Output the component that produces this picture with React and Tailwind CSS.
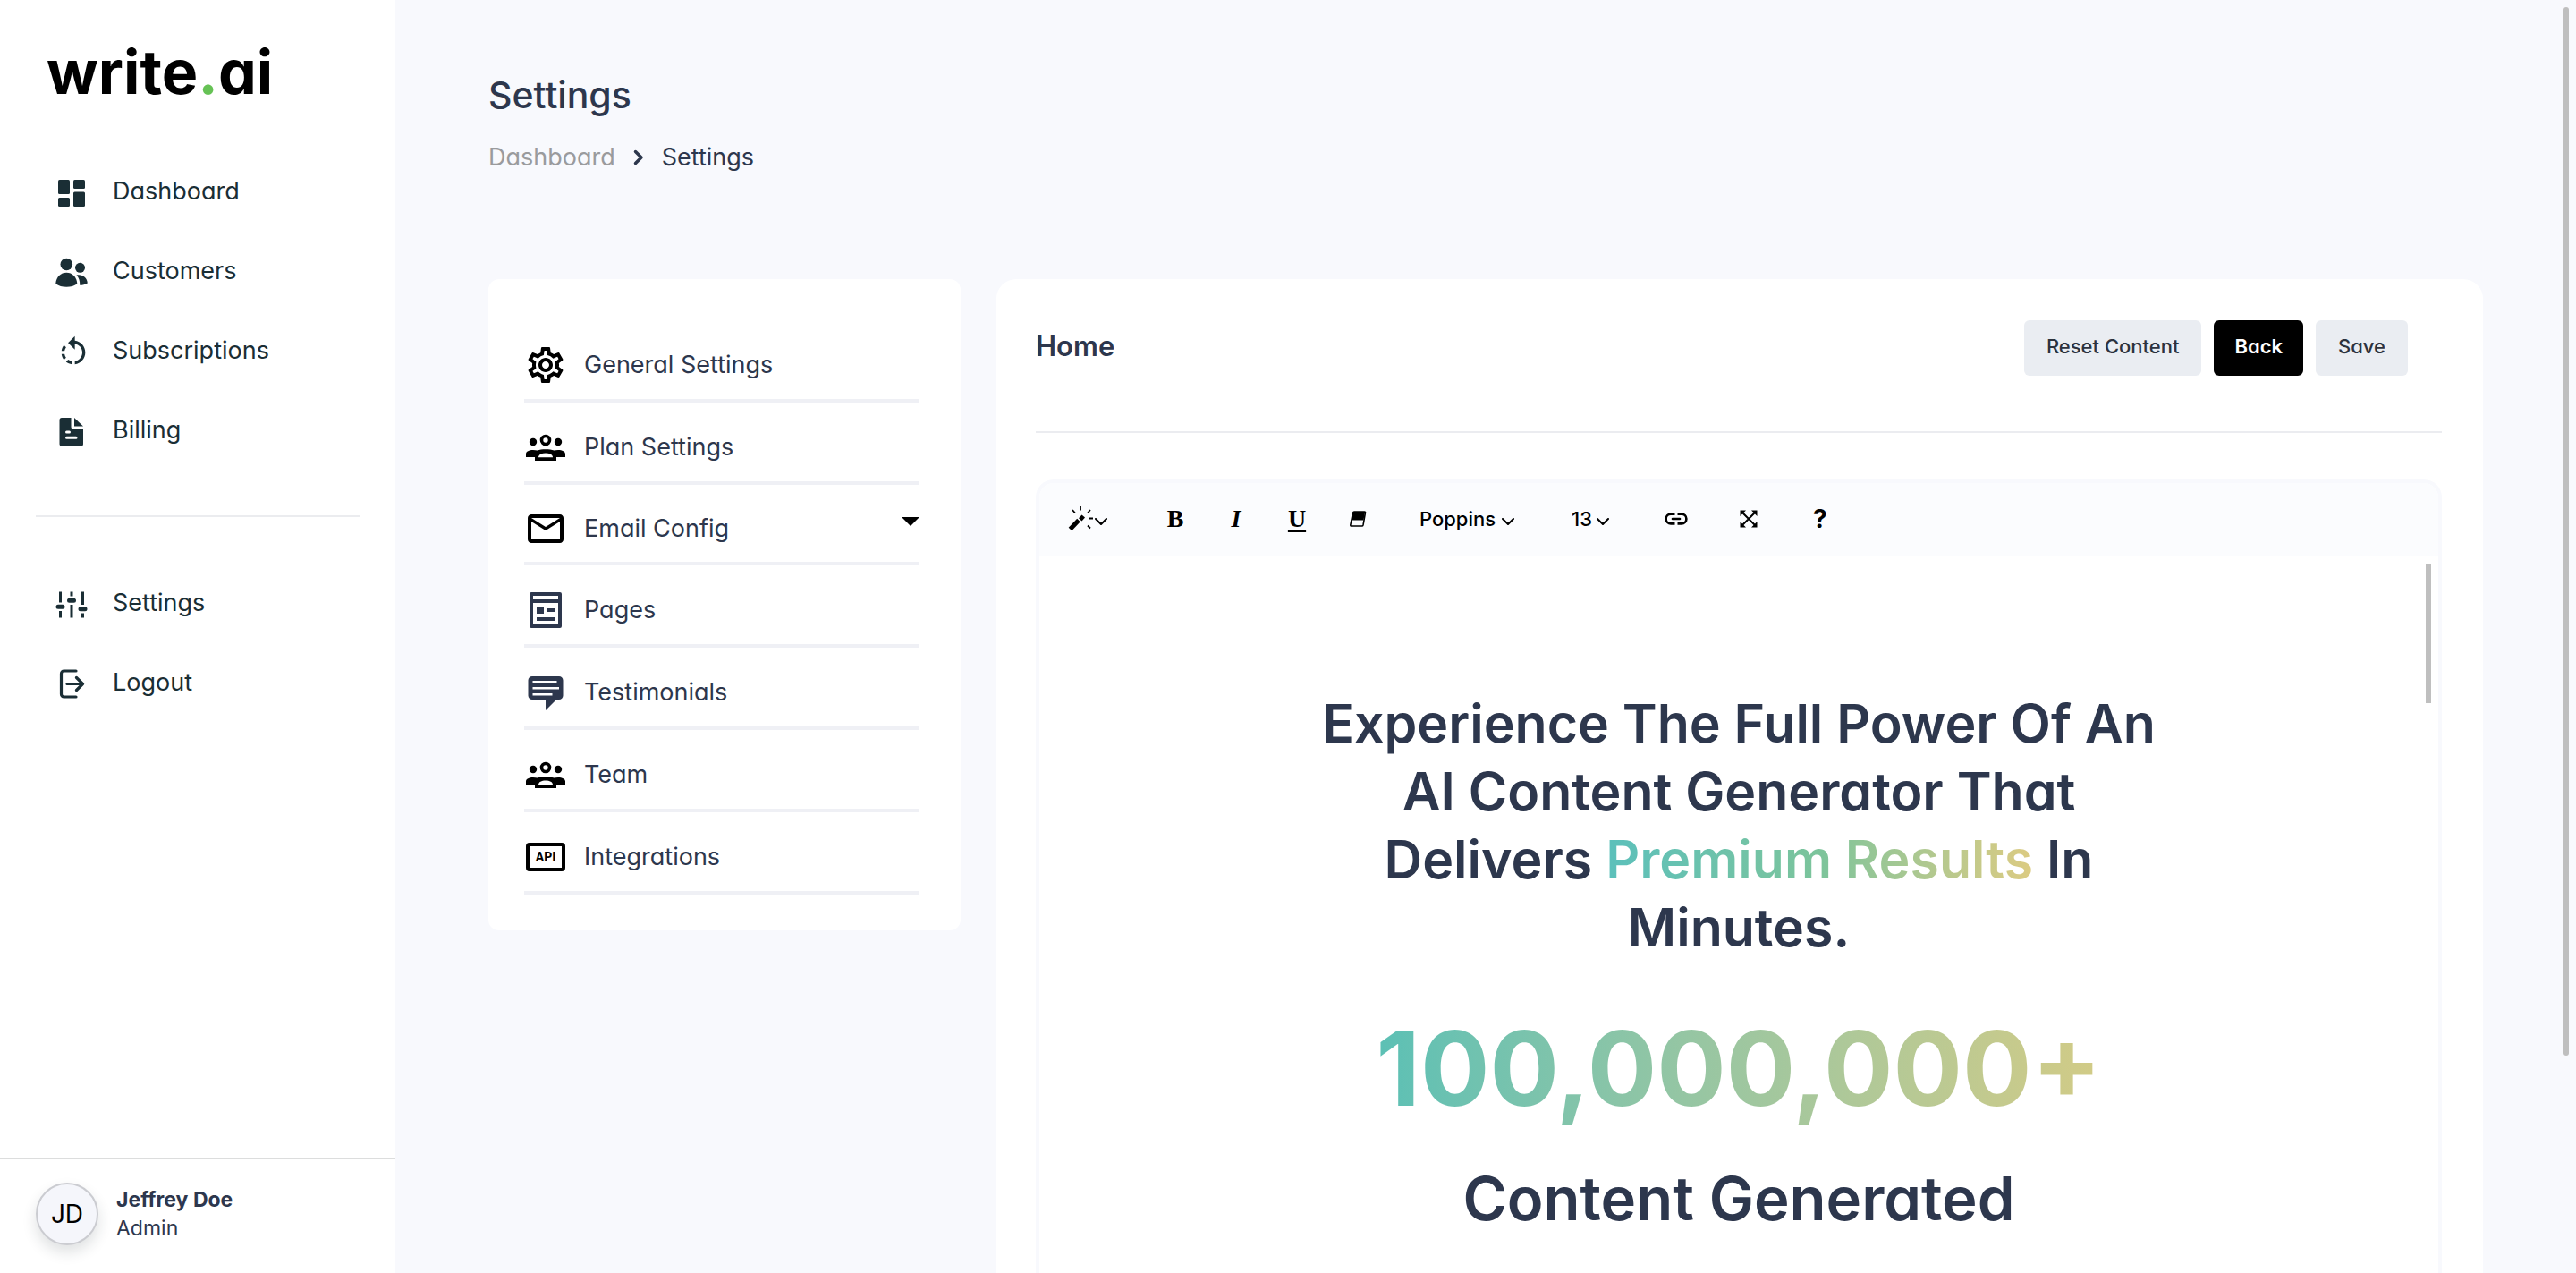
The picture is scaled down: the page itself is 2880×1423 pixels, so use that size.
import { MdRotateLeft, MdOutlineSettings, MdMailOutline } from "react-icons/md";

const DashboardIcon = () => (
  <svg viewBox="0 0 36 36" className="size-9" fill="currentColor" aria-hidden="true">
    <rect x="3" y="3" width="13" height="16" rx="1.5" />
    <rect x="20" y="3" width="13" height="10" rx="1.5" />
    <rect x="3" y="23" width="13" height="10" rx="1.5" />
    <rect x="20" y="16.500" width="13" height="16.500" rx="1.500" />
  </svg>
);

const CustomersIcon = () => (
  <svg viewBox="0 0 36 36" className="size-9" fill="currentColor" aria-hidden="true">
    <circle cx="12.300" cy="8.500" r="6.800" />
    <circle cx="27.500" cy="12.300" r="5.500" />
    <path d="M.3 30C.8 22.500 6 17.800 12.300 17.800S23.800 22.500 24.300 30.300c-3.200 2.500-7.500 3.500-12 3.500S3.500 32.800.3 30Z" />
    <path d="M23.500 20.600c6.500-1.300 11.700 2.500 12.300 8.800-2.500 1.700-5.600 2.300-8.600 2.300.3-4.400-1-8.400-3.700-11.100Z" />
  </svg>
);

const BillingIcon = () => (
  <svg viewBox="0 0 36 36" className="size-9" aria-hidden="true">
    <path
      fill="currentColor"
      d="M7 2h10.500v10.500a2 2 0 0 0 2 2H31V31.500a2 2 0 0 1-2 2H6.500a2 2 0 0 1-2-2V4.500A2.500 2.500 0 0 1 7 2Z"
    />
    <path fill="currentColor" d="M21 2v9.500h10Z" />
    <path d="M12.500 18h3M12.500 24.300h10.500" stroke="white" strokeWidth="3" strokeLinecap="round" />
  </svg>
);

const SlidersIcon = () => (
  <svg viewBox="0 0 36 36" className="size-9" stroke="currentColor" aria-hidden="true">
    <path strokeWidth="3" d="M5.500 3.500v12M5.500 25v7.500M18 3.500V8.500M18 18v14.500M30.500 3.500V18M30.500 27.500v5" />
    <path strokeWidth="5" strokeLinecap="round" d="M3 20.200h5M15.500 13.200h5M28 22.800h5" />
  </svg>
);

const LogoutIcon = () => (
  <svg
    viewBox="0 0 36 36"
    className="size-9"
    fill="none"
    stroke="currentColor"
    strokeWidth="3.200"
    strokeLinecap="round"
    strokeLinejoin="round"
    aria-hidden="true"
  >
    <path d="M23 3H9.500A3 3 0 0 0 6.500 6v23a3 3 0 0 0 3 3H23M13 17.500h17M23.500 10.500l7 7-7 7" />
  </svg>
);

const GroupIcon = () => (
  <svg viewBox="0 0 48 48" className="size-12" fill="black" aria-hidden="true">
    <circle cx="10" cy="18" r="4.200" />
    <circle cx="38" cy="18" r="4.200" />
    <circle cx="24" cy="16" r="4.500" fill="none" stroke="black" strokeWidth="3.600" />
    <path d="M2 35v-3.500C2 28.500 5.500 27 10 27c1.800 0 3.400.200 4.600.600C17.200 26.700 20.400 26.200 24 26.200s6.800.5 9.400 1.400c1.200-.4 2.800-.6 4.600-.6 4.500 0 8 1.500 8 4.500V35H36v4H12v-4Z" />
    <path d="M16 35.300c0-3.200 3.500-4.800 8-4.800s8 1.600 8 4.800Z" fill="white" />
  </svg>
);

const PagesIcon = () => (
  <svg viewBox="0 0 48 48" className="size-12 text-[#2d374d]" fill="none" stroke="currentColor" aria-hidden="true">
    <rect x="8" y="6" width="32" height="36" strokeWidth="4" strokeLinejoin="round" />
    <path strokeWidth="4" d="M8 14h32" />
    <path d="M14 24h8" strokeWidth="8" />
    <path d="M26 24h8M14 34h20" strokeWidth="4" />
  </svg>
);

const TestimonialsIcon = () => (
  <svg viewBox="0 0 48 48" className="size-12 text-[#2d374d]" aria-hidden="true">
    <path
      fill="currentColor"
      d="M9 6h30a4.500 4.500 0 0 1 4.500 4.500v17A4.500 4.500 0 0 1 39 32h-3L24 44V32H9a4.500 4.500 0 0 1-4.500-4.500v-17A4.500 4.500 0 0 1 9 6Z"
    />
    <path d="M9.500 12.300h27M9.500 19.300h29.500M9.500 26.300h22" stroke="white" strokeWidth="2.600" />
  </svg>
);

const ApiIcon = () => (
  <svg viewBox="0 0 48 48" className="size-12" aria-hidden="true">
    <rect x="4" y="10" width="40" height="28" rx="2" fill="none" stroke="black" strokeWidth="4" />
    <text x="24" y="29" textAnchor="middle" fontSize="14" fontWeight="700" fontFamily="Roboto, sans-serif">
      API
    </text>
  </svg>
);

const Chevron = () => (
  <svg viewBox="0 0 14 8" className="mt-1.5 h-2 w-3.5" fill="none" stroke="currentColor" strokeWidth="2" strokeLinecap="round" strokeLinejoin="round" aria-hidden="true">
    <path d="M1 1l6 6 6-6" />
  </svg>
);

const WandIcon = () => (
  <svg viewBox="0 0 28 28" className="size-7" fill="none" stroke="currentColor" aria-hidden="true">
    <path strokeWidth="5" d="M2.500 25.500 12 15.500" />
    <path fill="currentColor" stroke="none" d="M15.500 9.500l3.500 3-3.500 4-3.500-3.300Z" />
    <path strokeWidth="1.800" d="M14 0v4.500M5 4l3 3.500M25 4l-3 3.500M24 13.500h4M22 21.500l3 3" />
  </svg>
);

const EraserIcon = () => (
  <svg viewBox="0 0 20 20" className="size-5" aria-hidden="true">
    <path d="M6 2h11.500a1 1 0 0 1 1 1.200L16 17a1.400 1.400 0 0 1-1.400 1H2.800a1 1 0 0 1-1-1.200L4.600 3A1.500 1.500 0 0 1 6 2Z" fill="none" stroke="currentColor" strokeWidth="1.600" />
    <path d="M5 2h13.200L16.400 11.500H3Z" fill="currentColor" />
  </svg>
);

const LinkIcon = () => (
  <svg viewBox="0 0 26 14" className="h-3.5 w-[26px]" fill="none" stroke="currentColor" strokeWidth="2.600" aria-hidden="true">
    <path d="M11.500 1.600H7a5.400 5.400 0 0 0 0 10.800h4.500M14.500 1.600H19a5.400 5.400 0 0 1 0 10.800h-4.500" />
    <path d="M9 7h8" strokeLinecap="round" />
  </svg>
);

const ExpandIcon = () => (
  <svg viewBox="0 0 20 20" className="size-5" aria-hidden="true">
    <path d="M3 3l14 14M17 3L3 17" stroke="currentColor" strokeWidth="2" />
    <path d="M.5.500H7L.5 7ZM19.500.500H13L19.500 7ZM.500 19.500H7L.500 13ZM19.500 19.500H13L19.500 13Z" fill="currentColor" />
  </svg>
);

function NavItem({ icon, label }) {
  return (
    <li>
      <a href="#" className="flex h-[89px] items-center gap-6 pl-[62px] text-[27px] leading-10 text-[#1a2e35]">
        <span className="flex size-10 shrink-0 items-center justify-start pt-1">{icon}</span>
        {label}
      </a>
    </li>
  );
}

const settingsItems = [
  { label: "General Settings", icon: <MdOutlineSettings className="size-12 text-black" /> },
  { label: "Plan Settings", icon: <GroupIcon /> },
  { label: "Email Config", icon: <MdMailOutline className="size-12 text-black" />, menu: true },
  { label: "Pages", icon: <PagesIcon /> },
  { label: "Testimonials", icon: <TestimonialsIcon /> },
  { label: "Team", icon: <GroupIcon /> },
  { label: "Integrations", icon: <ApiIcon /> },
];

function Sidebar() {
  return (
    <aside className="flex w-[442px] shrink-0 flex-col bg-white">
      <a href="#" className="px-[52px] pt-10 text-[68px] leading-20 font-bold text-black" aria-label="write.ai">
        write<span className="text-[#66c255]">.</span>ai
      </a>
      <nav className="mt-[49px]">
        <ul>
          <NavItem label="Dashboard" icon={<DashboardIcon />} />
          <NavItem label="Customers" icon={<CustomersIcon />} />
          <NavItem label="Subscriptions" icon={<MdRotateLeft className="size-10" />} />
          <NavItem label="Billing" icon={<BillingIcon />} />
        </ul>
        <hr className="mx-10 mt-[51px] mb-[51px] border-t-2 border-[#ebecef]" />
        <ul>
          <NavItem label="Settings" icon={<SlidersIcon />} />
          <NavItem label="Logout" icon={<LogoutIcon />} />
        </ul>
      </nav>
      <div className="mt-auto flex items-center gap-5 border-t-2 border-[#dcdddd] px-10 pt-[26px] pb-[31px]">
        <span className="flex size-[70px] items-center justify-center rounded-full border-2 border-[#cbccd1] bg-[#f5f6fb] text-[28px] text-black shadow-[0_8px_16px_rgba(26,46,53,0.14)]">
          JD
        </span>
        <div className="text-[23px] leading-8 text-[#2d374d]">
          <p className="font-bold">Jeffrey Doe</p>
          <p>Admin</p>
        </div>
      </div>
    </aside>
  );
}

function SettingsMenu() {
  return (
    <nav className="rounded-xl bg-white px-10 pt-[46px] pb-10" aria-label="Settings sections">
      <ul className="mr-1.5">
        {settingsItems.map(({ label, icon, menu }) => (
          <li key={label} className={menu ? "h-[90px] border-b-4 border-[#eff0f5]" : "h-[92px] border-b-4 border-[#eff0f5]"}>
            <a href="#" className="flex h-full items-center pt-3 text-[27px] leading-10 text-[#2d374d]">
              <span className="mr-[19px] flex w-12 shrink-0 justify-center">{icon}</span>
              <span className="grow">{label}</span>
              {menu && (
                <svg viewBox="0 0 20 10" className="mb-4 h-2.5 w-5" aria-hidden="true">
                  <path d="M0 0h20L10 10Z" fill="black" />
                </svg>
              )}
            </a>
          </li>
        ))}
      </ul>
    </nav>
  );
}

function Toolbar() {
  return (
    <div role="toolbar" aria-label="Formatting" className="flex h-[82px] items-center bg-[#fbfcfe] pb-0.5 pl-8 text-[22px] font-medium text-black">
      <button aria-label="Style" className="flex w-11 items-center gap-0.5"><WandIcon /><Chevron /></button>
      <div className="ml-[59px] flex items-center font-['Liberation_Serif',serif] text-[28px] font-bold">
        <button aria-label="Bold" className="w-[34px] text-center">B</button>
        <button aria-label="Italic" className="ml-[34px] w-[34px] text-center italic">I</button>
        <button aria-label="Underline" className="ml-[34px] w-[34px] text-center underline decoration-2 underline-offset-4">U</button>
        <button aria-label="Clear formatting" className="ml-[34px] flex w-[34px] justify-center"><EraserIcon /></button>
      </div>
      <button aria-label="Font family" className="ml-[52px] flex w-[106px] items-center justify-between">Poppins<Chevron /></button>
      <button aria-label="Font size" className="ml-[64px] flex w-[42px] items-center justify-between">13<Chevron /></button>
      <button aria-label="Link" className="ml-[62px]"><LinkIcon /></button>
      <button aria-label="Full screen" className="ml-[58px]"><ExpandIcon /></button>
      <button aria-label="Help" className="ml-[62px] text-[28px] font-bold">?</button>
    </div>
  );
}

function Editor() {
  return (
    <div className="relative grow overflow-hidden rounded-t-[20px] border-4 border-b-0 border-[#f8f9fd] bg-white">
      <Toolbar />
      <div className="flex flex-col items-center px-10 pt-[149px] text-center text-[#2d374d]">
        <h2 className="text-[59px] leading-[76px] font-semibold">
          <span className="block">Experience The Full Power Of An</span>
          <span className="block">AI Content Generator That</span>
          <span className="block">
            Delivers{" "}
            <span className="bg-linear-to-r from-[#5bc0bb] via-[#7cc49b] to-[#dccb82] bg-clip-text text-transparent">Premium Results</span> In
          </span>
          <span className="block">Minutes.</span>
        </h2>
        <p className="mt-[45px] bg-linear-to-r from-[#5bc0b5] to-[#d2cb86] bg-clip-text text-[115px] leading-[150px] font-bold text-transparent">
          100,000,000+
        </p>
        <h3 className="mt-[30px] text-[67px] leading-[80px] font-semibold">Content Generated</h3>
      </div>
      <div className="absolute top-[90px] right-2 h-[156px] w-1.5 bg-[#bfbfbf]" />
    </div>
  );
}

export default function App() {
  return (
    <div className="relative flex h-screen overflow-hidden bg-[#f8f9fd] font-[Inter,sans-serif] [font-feature-settings:'cv11']">
      <Sidebar />
      <main className="flex min-w-0 grow flex-col px-[104px] pt-[76px]">
        <h1 className="text-[41px] leading-[60px] font-medium text-[#2d374d]">Settings</h1>
        <nav aria-label="Breadcrumb" className="mt-5 flex items-center text-[27px] leading-10 text-[#2d374d]">
          <a href="#" className="text-[#9a9b9d]">Dashboard</a>
          <svg viewBox="0 0 12 18" className="mx-5 h-[18px] w-3" fill="none" stroke="currentColor" strokeWidth="3.500" strokeLinecap="round" strokeLinejoin="round" aria-hidden="true">
            <path d="M2.500 2.500 9 9l-6.500 6.500" />
          </svg>
          <span>Settings</span>
        </nav>
        <div className="mt-[116px] grid min-h-0 grow grid-cols-[528px_1fr] gap-10">
          <div><SettingsMenu /></div>
          <section className="flex min-h-0 min-w-0 flex-col rounded-t-[22px] bg-white pt-[46px] pr-[46px] pl-11">
            <header className="flex items-center justify-between border-b-2 border-[#ebecf0] pr-[38px] pb-[62px]">
              <h2 className="pb-1 text-[31px] leading-10 font-semibold text-[#2d374d]">Home</h2>
              <div className="flex gap-3.5 text-[22px] font-medium text-[#2c323e]">
                <button className="h-[62px] rounded-md bg-[#eaedf2] px-[25px] pb-1">Reset Content</button>
                <button className="h-[62px] rounded-md bg-black px-[23px] pb-1 font-semibold text-white">Back</button>
                <button className="h-[62px] rounded-md bg-[#eaedf2] px-[25px] pb-1">Save</button>
              </div>
            </header>
            <div className="mt-[52px] flex min-h-0 grow flex-col"><Editor /></div>
          </section>
        </div>
      </main>
      <div className="absolute top-2 right-2 h-[1172px] w-1.5 rounded-full bg-[#bfbfbf]" />
    </div>
  );
}
